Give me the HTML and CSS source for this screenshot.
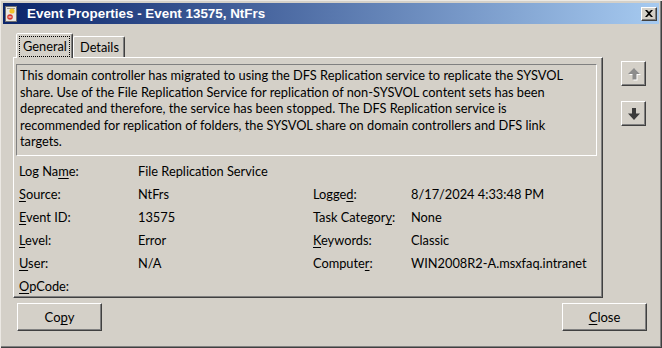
FILE: index.html
```html
<!DOCTYPE html>
<html lang="en">
<head>
    <meta charset="UTF-8">
    <title>Event Properties - Event 13575, NtFrs</title>
    <link rel="stylesheet" href="styles.css">
</head>
<body>
    <div class="window">
        <div class="titlebar">
            <svg class="title-icon" width="13" height="16" viewBox="0 0 13 16">
                <rect x="0.5" y="0.5" width="11" height="15" fill="#e9e7e2" stroke="#707070"/>
                <rect x="2" y="2" width="8" height="1" fill="#9a9a9a"/>
                <circle cx="7" cy="5" r="2.6" fill="#f2c32a"/>
                <circle cx="5" cy="11" r="2.8" fill="#d8392e"/>
                <rect x="3.5" y="10.5" width="3" height="1" fill="#fff"/>
            </svg>
            <span class="title">Event Properties - Event 13575, NtFrs</span>
            <button class="close-btn" title="Close">
                <svg width="8" height="7" viewBox="0 0 8 7">
                    <path d="M0 0h2l2 2 2-2h2L5 3.5 8 7H6L4 5 2 7H0l3-3.5z" fill="#000"/>
                </svg>
            </button>
        </div>

        <div class="main">
            <div class="sheet">
                <div class="tabs">
                    <div class="tab tab-active"><span class="focus">General</span></div>
                    <div class="tab">Details</div>
                </div>
                <div class="panel">
                    <div class="desc">
                        This domain controller has migrated to using the DFS Replication service to replicate the SYSVOL<br>
                        share. Use of the File Replication Service for replication of non-SYSVOL content sets has been<br>
                        deprecated and therefore, the service has been stopped. The DFS Replication service is<br>
                        recommended for replication of folders, the SYSVOL share on domain controllers and DFS link<br>
                        targets.
                    </div>
                    <div class="fields">
                        <span>Log Na<u>m</u>e:</span>
                        <span>File Replication Service</span>
                        <span></span>
                        <span></span>

                        <span><u>S</u>ource:</span>
                        <span>NtFrs</span>
                        <span>Logge<u>d</u>:</span>
                        <span>8/17/2024 4:33:48 PM</span>

                        <span><u>E</u>vent ID:</span>
                        <span>13575</span>
                        <span>Task Categor<u>y</u>:</span>
                        <span>None</span>

                        <span><u>L</u>evel:</span>
                        <span>Error</span>
                        <span><u>K</u>eywords:</span>
                        <span>Classic</span>

                        <span><u>U</u>ser:</span>
                        <span>N/A</span>
                        <span>Compute<u>r</u>:</span>
                        <span>WIN2008R2-A.msxfaq.intranet</span>

                        <span><u>O</u>pCode:</span>
                        <span></span>
                        <span></span>
                        <span></span>
                    </div>
                </div>
            </div>

            <div class="nav">
                <button class="nav-btn" disabled>
                    <svg width="14" height="14" viewBox="0 0 14 14">
                        <path d="M8 2 14 8h-3.5v5.5h-4V8H2z" fill="#fff"/>
                        <path d="M7 1 13 7H9.5v5.5h-4V7H1z" fill="#8c8c8c"/>
                    </svg>
                </button>
                <button class="nav-btn">
                    <svg width="14" height="14" viewBox="0 0 14 14">
                        <path d="M5 1h4v5.5h4L7 13 1 6.5h4z" fill="#3a3a3a"/>
                    </svg>
                </button>
            </div>
        </div>

        <div class="footer">
            <button class="btn">Co<u>p</u>y</button>
            <button class="btn"><u>C</u>lose</button>
        </div>
    </div>
</body>
</html>
```

FILE: styles.css
```css
* {
    margin: 0;
    padding: 0;
    box-sizing: border-box;
}

body {
    background: #d4d0c8;
    font-family: Lato, "Noto Sans", sans-serif;
    font-size: 12.8px;
    color: #000;
}

u {
    text-decoration: underline;
    text-underline-offset: 2px;
}

.window {
    width: 662px;
    height: 348px;
    padding: 3px;
    background: #d4d0c8;
    box-shadow: inset 1px 1px #ece9e4, inset -1px -1px #404040, inset -2px -2px #808080;
    display: flex;
    flex-direction: column;
}

/* title bar */
.titlebar {
    height: 21px;
    display: flex;
    align-items: center;
    padding: 0 2px 0 2px;
    background: linear-gradient(to right, #0a246a, #a6caf0);
    color: #fff;
}

.title-icon {
    margin-right: 9px;
    flex-shrink: 0;
}

.title {
    flex: 1;
    font-family: "Liberation Sans", sans-serif;
    font-weight: bold;
    font-size: 13.4px;
}

.close-btn {
    width: 16px;
    height: 14px;
    display: flex;
    align-items: center;
    justify-content: center;
    background: #d4d0c8;
    border: 1px solid;
    border-color: #fff #404040 #404040 #fff;
    box-shadow: inset -1px -1px #808080;
}

/* tabs and panel */
.main {
    display: flex;
    margin-top: 9px;
    padding-left: 10px;
}

.sheet {
    width: 590px;
}

.tabs {
    height: 24px;
    display: flex;
    align-items: flex-end;
    padding-left: 3px;
}

.tab {
    width: 52px;
    height: 21px;
    display: flex;
    align-items: center;
    padding-left: 6px;
    border: 1px solid;
    border-bottom: none;
    border-color: #fff #404040 transparent #fff;
    box-shadow: inset -1px 0 #808080;
    border-radius: 2px 2px 0 0;
}

.tab-active {
    width: 57px;
    height: 25px;
    margin-bottom: -1px;
    padding: 0 2px;
    background: #d4d0c8;
    position: relative;
    z-index: 1;
}

.focus {
    display: block;
    width: 100%;
    padding: 1px 0 2px 3px;
    border: 1px dotted #000;
}

.panel {
    height: 241px;
    border: 1px solid;
    border-color: #fff #404040 #404040 #fff;
    box-shadow: inset -1px -1px #808080;
}

.desc {
    height: 92px;
    margin: 6px 5px 0 2px;
    padding: 2px 0 0 3px;
    line-height: 16.5px;
    white-space: nowrap;
    border: 1px solid;
    border-color: #808080 #fff #fff #808080;
}

.fields {
    display: grid;
    grid-template-columns: 119px 175px 98px 1fr;
    grid-auto-rows: 23px;
    margin-top: 4px;
    padding-left: 5px;
    line-height: 23px;
}

/* navigation arrows */
.nav {
    display: flex;
    flex-direction: column;
    gap: 15px;
    margin-left: 18px;
    padding-top: 28px;
}

.nav-btn {
    width: 25px;
    height: 25px;
    display: flex;
    align-items: center;
    justify-content: center;
    background: #d4d0c8;
    border: 1px solid;
    border-color: #fff #404040 #404040 #fff;
    box-shadow: inset -1px -1px #808080;
}

/* buttons */
.footer {
    display: flex;
    justify-content: space-between;
    margin-top: 5px;
    padding: 0 12px 0 14px;
}

.btn {
    width: 85px;
    height: 28px;
    font-family: inherit;
    font-size: 13px;
    color: #000;
    background: #d4d0c8;
    border: 1px solid;
    border-color: #fff #404040 #404040 #fff;
    box-shadow: inset -1px -1px #808080;
}
```
